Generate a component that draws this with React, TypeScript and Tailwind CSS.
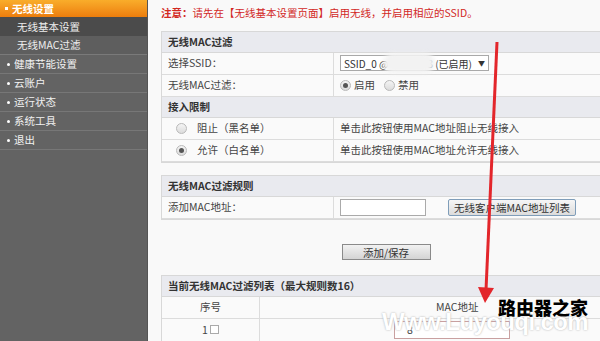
import React from "react";

const font = { fontFamily: '"Noto Sans CJK SC", "Liberation Sans", sans-serif' };

const menu = ["健康节能设置", "云账户", "运行状态", "系统工具", "退出"];

function Radio({ on }: { on?: boolean }) {
  return (
    <span className="inline-grid h-[11px] w-[11px] place-items-center rounded-full border border-[#b9b9b9] bg-gradient-to-b from-[#f4f4f4] to-[#dcdcdc]">
      {on && <span className="h-[5px] w-[5px] rounded-full bg-[#555]" />}
    </span>
  );
}

function Head({ children }: { children: React.ReactNode }) {
  return (
    <div className="flex h-[21px] items-center border-b border-[#d8d8d8] bg-[#e9eaef] px-[6px] font-bold text-[#333]">
      {children}
    </div>
  );
}

function Row({ left, right }: { left: React.ReactNode; right: React.ReactNode }) {
  return (
    <div className="flex h-[22px] border-b border-[#dcdcdc] bg-[#fafafa]">
      <div className="flex w-[172px] items-center border-r border-[#dcdcdc] px-[6px]">{left}</div>
      <div className="flex flex-1 items-center px-[6px]">{right}</div>
    </div>
  );
}

export default function App() {
  return (
    <div className="relative flex h-[341px] w-[600px] overflow-hidden text-[10.5px] text-[#444]" style={font}>
      <aside className="w-[148px] shrink-0 border-r border-[#555] bg-[#636363] text-white">
        <div className="flex h-[17px] items-center gap-[4px] bg-gradient-to-b from-[#f9ad2a] to-[#ec7d0c] pl-[5px] font-bold">
          <span className="h-[3px] w-[3px] bg-white" />
          无线设置
        </div>
        <div className="flex h-[19px] items-center bg-[#4b4b4b] pl-[17px] text-[#eee]">无线基本设置</div>
        <div className="flex h-[19px] items-center border-b border-[#7a7a7a] bg-[#5e5e5e] pl-[17px] text-[#eee]">无线MAC过滤</div>
        {menu.map((m) => (
          <div key={m} className="flex h-[19px] items-center gap-[4px] border-b border-[#777] pl-[7px] text-[#f2f2f2]">
            <span className="h-[3px] w-[3px] rounded-full bg-white" />
            {m}
          </div>
        ))}
      </aside>

      <main className="flex-1 bg-[#f9f9f9] pl-[13px]">
        <p className="pt-[5px] text-[#d2281f]">
          <b>注意：</b>请先在【无线基本设置页面】启用无线，并启用相应的SSID。
        </p>

        <div className="mt-[10px] w-[480px] border border-[#d8d8d8]">
          <Head>无线MAC过滤</Head>
          <Row
            left="选择SSID："
            right={
              <div className="relative flex h-[16px] w-[149px] items-center justify-between whitespace-nowrap border border-[#a9a9a9] bg-white px-[3px] text-[10px] text-[#333]">
                <span>SSID_0 @</span>
                <span className="ml-auto mr-[6px]">3 (已启用)</span>
                <span className="text-[7px]">▼</span>
                <span className="absolute left-[42px] top-[-3px] h-[20px] w-[52px] rounded-full bg-[#f2f2f2] blur-[2px]" />
              </div>
            }
          />
          <Row
            left="无线MAC过滤："
            right={
              <div className="flex items-center gap-[3px]">
                <Radio on />启用<span className="ml-[3px]" /><Radio />禁用
              </div>
            }
          />
          <Head>接入限制</Head>
          <Row
            left={
              <div className="flex items-center gap-[10px] pl-[8px]">
                <Radio />阻止（黑名单）
              </div>
            }
            right="单击此按钮使用MAC地址阻止无线接入"
          />
          <Row
            left={
              <div className="flex items-center gap-[10px] pl-[8px]">
                <Radio on />允许（白名单）
              </div>
            }
            right="单击此按钮使用MAC地址允许无线接入"
          />
        </div>

        <div className="mt-[12px] w-[480px] border border-[#d8d8d8]">
          <Head>无线MAC过滤规则</Head>
          <Row
            left="添加MAC地址："
            right={
              <div className="flex items-center gap-[22px]">
                <span className="h-[17px] w-[86px] border border-[#aaa] bg-white" />
                <button className="h-[17px] rounded-[2px] border border-[#7f9db9] bg-gradient-to-b from-[#f6f6f6] to-[#dcdcdc] px-[5px] text-[10.5px] text-[#333]">
                  无线客户端MAC地址列表
                </button>
              </div>
            }
          />
        </div>

        <div className="mt-[24px] flex w-[400px] justify-center">
          <button className="ml-[50px] h-[16px] w-[89px] border border-[#8a8a8a] bg-gradient-to-b from-[#f2f2f2] to-[#d4d4d4] text-[10.5px] text-[#333]">
            添加/保存
          </button>
        </div>

        <div className="mt-[15px] w-[480px] border border-[#d8d8d8]">
          <Head>当前无线MAC过滤列表（最大规则数16）</Head>
          <div className="flex h-[22px] border-b border-[#dcdcdc] bg-[#fafafa]">
            <div className="grid w-[98px] place-items-center border-r border-[#dcdcdc]">序号</div>
            <div className="flex flex-1 items-center pl-[176px]">MAC地址</div>
          </div>
          <div className="flex h-[22px] bg-[#fafafa]">
            <div className="flex w-[98px] items-center justify-center gap-[2px] border-r border-[#dcdcdc]">
              1<span className="h-[9px] w-[9px] border border-[#aaa] bg-white" />
            </div>
            <div className="flex flex-1 items-center pl-[134px]">
              <span className="h-[18px] w-[116px] border border-[#c9a0a0] bg-white pl-[12px]">8</span>
            </div>
          </div>
        </div>
      </main>

      <svg className="pointer-events-none absolute left-0 top-0" width="600" height="341">
        <line x1="497" y1="42" x2="486" y2="290" stroke="#e3262b" strokeWidth="3" />
        <polygon points="478,287 494,288 485,303" fill="#e3262b" />
      </svg>

      <div className="pointer-events-none absolute left-[498px] top-[298px] text-[18px] font-black leading-none text-black">路由器之家</div>
      <div
        className="pointer-events-none absolute left-[382px] top-[310px] text-[24px] font-black leading-none tracking-tight text-white"
        style={{ fontFamily: '"Liberation Sans", sans-serif', textShadow: "0 0 2px #aaa" }}
      >
        Www.Luyouqi.com
      </div>
    </div>
  );
}
